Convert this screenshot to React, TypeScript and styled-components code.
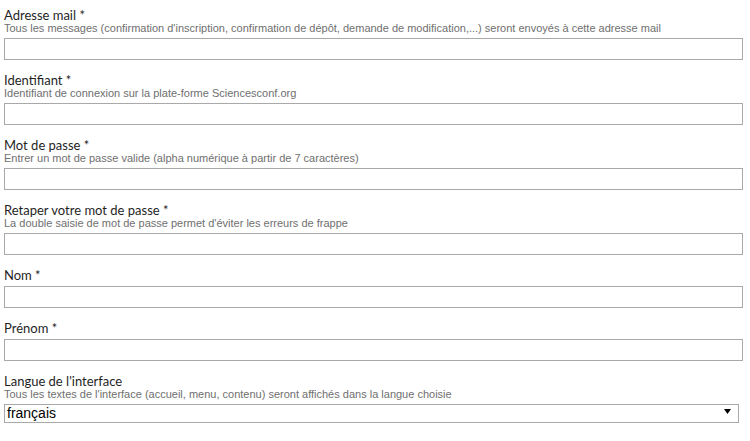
import React from "react";
import styled, { createGlobalStyle } from "styled-components";

const Global = createGlobalStyle`
  html, body { margin: 0; padding: 0; background: #fff; }
  body { font-family: "Liberation Sans", Arial, sans-serif; }
`;

const Form = styled.form`
  display: flex;
  flex-direction: column;
  gap: 14px;
  padding: 9px 0 0 4px;
`;

const Field = styled.div`
  display: flex;
  flex-direction: column;
`;

const Label = styled.label`
  display: block;
  font-family: Lato, "Open Sans", sans-serif;
  font-size: 13px;
  line-height: 13px;
  color: #1f1f1f;
`;

const Help = styled.div`
  font-family: "Liberation Sans", Arial, sans-serif;
  font-size: 11px;
  line-height: 12px;
  color: #6f6f6f;
  white-space: nowrap;
`;

const Input = styled.input`
  box-sizing: border-box;
  margin: 4px 0 0 0;
  width: 739px;
  height: 22px;
  border: 1px solid #a9a9a9;
  border-radius: 0;
  padding: 1px 3px;
  font-family: "Liberation Sans", Arial, sans-serif;
  font-size: 13px;
  background: #fff;
  outline: none;
`;

const SelectWrap = styled.div`
  position: relative;
  margin-top: 4px;
  width: 735px;
  height: 19px;
`;

const Select = styled.select`
  box-sizing: border-box;
  appearance: none;
  -webkit-appearance: none;
  width: 100%;
  height: 19px;
  margin: 0;
  border: 1px solid #a9a9a9;
  border-radius: 0;
  padding: 0 0 0 2px;
  font-family: "Liberation Sans", Arial, sans-serif;
  font-size: 14px;
  line-height: 17px;
  color: #000;
  background: #fff;
  outline: none;
`;

const Arrow = styled.svg`
  position: absolute;
  right: 8px;
  top: 5px;
  width: 7px;
  height: 5px;
  pointer-events: none;
`;

type FieldDef = { label: string; help?: string; type?: string };

const fields: FieldDef[] = [
  {
    label: "Adresse mail *",
    help: "Tous les messages (confirmation d'inscription, confirmation de dépôt, demande de modification,...) seront envoyés à cette adresse mail",
    type: "text",
  },
  {
    label: "Identifiant *",
    help: "Identifiant de connexion sur la plate-forme Sciencesconf.org",
    type: "text",
  },
  {
    label: "Mot de passe *",
    help: "Entrer un mot de passe valide (alpha numérique à partir de 7 caractères)",
    type: "password",
  },
  {
    label: "Retaper votre mot de passe *",
    help: "La double saisie de mot de passe permet d'éviter les erreurs de frappe",
    type: "password",
  },
  { label: "Nom *", type: "text" },
  { label: "Prénom *", type: "text" },
];

export default function App() {
  return (
    <>
      <Global />
      <Form onSubmit={(e) => e.preventDefault()}>
        {fields.map((f) => (
          <Field key={f.label}>
            <Label>{f.label}</Label>
            {f.help && <Help>{f.help}</Help>}
            <Input type={f.type} />
          </Field>
        ))}
        <Field>
          <Label>Langue de l'interface</Label>
          <Help>Tous les textes de l'interface (accueil, menu, contenu) seront affichés dans la langue choisie</Help>
          <SelectWrap>
            <Select defaultValue="fr">
              <option value="fr">français</option>
              <option value="en">English</option>
            </Select>
            <Arrow viewBox="0 0 7 5">
              <polygon points="0,0 7,0 3.5,5" fill="#000" />
            </Arrow>
          </SelectWrap>
        </Field>
      </Form>
    </>
  );
}
